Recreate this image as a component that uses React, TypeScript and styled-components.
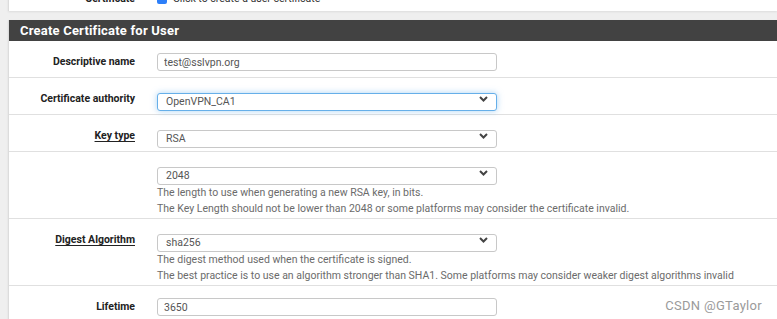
import React from "react";
import styled, { createGlobalStyle } from "styled-components";

const Global = createGlobalStyle`
  html, body { margin: 0; padding: 0; }
  body {
    background: #efefef;
    font-family: Roboto, "Liberation Sans", sans-serif;
    overflow: hidden;
    width: 777px;
    height: 319px;
  }
`;

const Page = styled.div`
  position: relative;
  padding-left: 8px;
  height: 319px;
  overflow: hidden;
`;

const Panel = styled.div<{ $clipTop?: number }>`
  background: #fff;
  border-left: 1px solid #dcdcdc;
  margin-top: ${(p) => (p.$clipTop ? `-${p.$clipTop}px` : "0")};
  margin-bottom: 9px;
  box-shadow: 0 1px 2px rgba(0, 0, 0, 0.08);
`;

const PanelHeading = styled.div`
  background: #424242;
  color: #fff;
  font-weight: 700;
  font-size: 13px;
  height: 21px;
  line-height: 21px;
  padding-left: 11px;
  letter-spacing: 0.2px;
`;

const Row = styled.div<{ $last?: boolean }>`
  display: grid;
  grid-template-columns: 148px 340px;
  padding: 12px 0 6px;
  border-bottom: ${(p) => (p.$last ? "none" : "1px solid #e0e0e0")};
`;

const Label = styled.div<{ $link?: boolean; $shift?: number }>`
  text-align: right;
  padding-right: 22px;
  font-size: 10.5px;
  font-weight: 700;
  color: #222;
  line-height: 18px;
  transform: translateY(${(p) => p.$shift ?? 0}px);
  span {
    text-decoration: ${(p) => (p.$link ? "underline" : "none")};
    text-underline-offset: 2px;
  }
`;

const Field = styled.div`
  display: flex;
  flex-direction: column;
`;

const TextInput = styled.input`
  box-sizing: border-box;
  width: 340px;
  height: 18px;
  border: 1px solid #c8c8c8;
  border-radius: 3px;
  padding: 0 6px;
  font-family: Roboto, "Liberation Sans", sans-serif;
  font-size: 10.5px;
  color: #555;
  outline: none;
`;

const SelectWrap = styled.div`
  position: relative;
  width: 340px;
  height: 18px;
`;

const SelectBox = styled.select<{ $focus?: boolean }>`
  appearance: none;
  -webkit-appearance: none;
  box-sizing: border-box;
  width: 340px;
  height: 18px;
  border: 1px solid ${(p) => (p.$focus ? "#66afe9" : "#c8c8c8")};
  box-shadow: ${(p) => (p.$focus ? "0 0 6px rgba(102,175,233,0.55)" : "none")};
  border-radius: 3px;
  padding: 0 8px;
  background: #fff;
  font-family: Roboto, "Liberation Sans", sans-serif;
  font-size: 10.5px;
  color: #555;
  outline: none;
`;

const Chevron = styled.svg`
  position: absolute;
  right: 9px;
  top: 6px;
  pointer-events: none;
`;

const Help = styled.div`
  margin: 3px 0 -5px;
  font-size: 10.5px;
  line-height: 16px;
  color: #6b6b6b;
  white-space: nowrap;
`;

const CheckLine = styled.div`
  display: flex;
  align-items: center;
  gap: 6px;
  font-size: 10.5px;
  color: #333;
  line-height: 18px;
  transform: translateY(3px);
`;

const Check = styled.span`
  width: 10px;
  height: 10px;
  background: #2d7ff9;
  border-radius: 2px;
`;

const Watermark = styled.div`
  position: absolute;
  right: 15px;
  bottom: 6px;
  font-size: 13px;
  color: #9a9a9a;
  letter-spacing: 0.3px;
`;

const Select: React.FC<{ value: string; focus?: boolean }> = ({ value, focus }) => (
  <SelectWrap>
    <SelectBox $focus={focus} defaultValue={value}>
      <option>{value}</option>
    </SelectBox>
    <Chevron width="9" height="6" viewBox="0 0 9 6">
      <path d="M1 1 L4.5 4.5 L8 1" fill="none" stroke="#444" strokeWidth="2" />
    </Chevron>
  </SelectWrap>
);

export default function App() {
  return (
    <>
      <Global />
      <Page>
        <Panel $clipTop={25}>
          <Row $last>
            <Label $shift={3}>Certificate</Label>
            <Field>
              <CheckLine>
                <Check />
                Click to create a user certificate
              </CheckLine>
            </Field>
          </Row>
        </Panel>
        <Panel>
          <PanelHeading>Create Certificate for User</PanelHeading>
          <Row>
            <Label>Descriptive name</Label>
            <Field>
              <TextInput defaultValue="test@sslvpn.org" />
            </Field>
          </Row>
          <Row>
            <Label>Certificate authority</Label>
            <Field>
              <Select value="OpenVPN_CA1" focus />
            </Field>
          </Row>
          <Row>
            <Label $link>
              <span>Key type</span>
            </Label>
            <Field>
              <Select value="RSA" />
            </Field>
          </Row>
          <Row>
            <Label />
            <Field>
              <Select value="2048" />
              <Help>
                The length to use when generating a new RSA key, in bits.
                <br />
                The Key Length should not be lower than 2048 or some platforms may consider the certificate invalid.
              </Help>
            </Field>
          </Row>
          <Row>
            <Label $link>
              <span>Digest Algorithm</span>
            </Label>
            <Field>
              <Select value="sha256" />
              <Help>
                The digest method used when the certificate is signed.
                <br />
                The best practice is to use an algorithm stronger than SHA1. Some platforms may consider weaker digest algorithms invalid
              </Help>
            </Field>
          </Row>
          <Row>
            <Label>Lifetime</Label>
            <Field>
              <TextInput defaultValue="3650" />
            </Field>
          </Row>
        </Panel>
        <Watermark>CSDN @GTaylor</Watermark>
      </Page>
    </>
  );
}
